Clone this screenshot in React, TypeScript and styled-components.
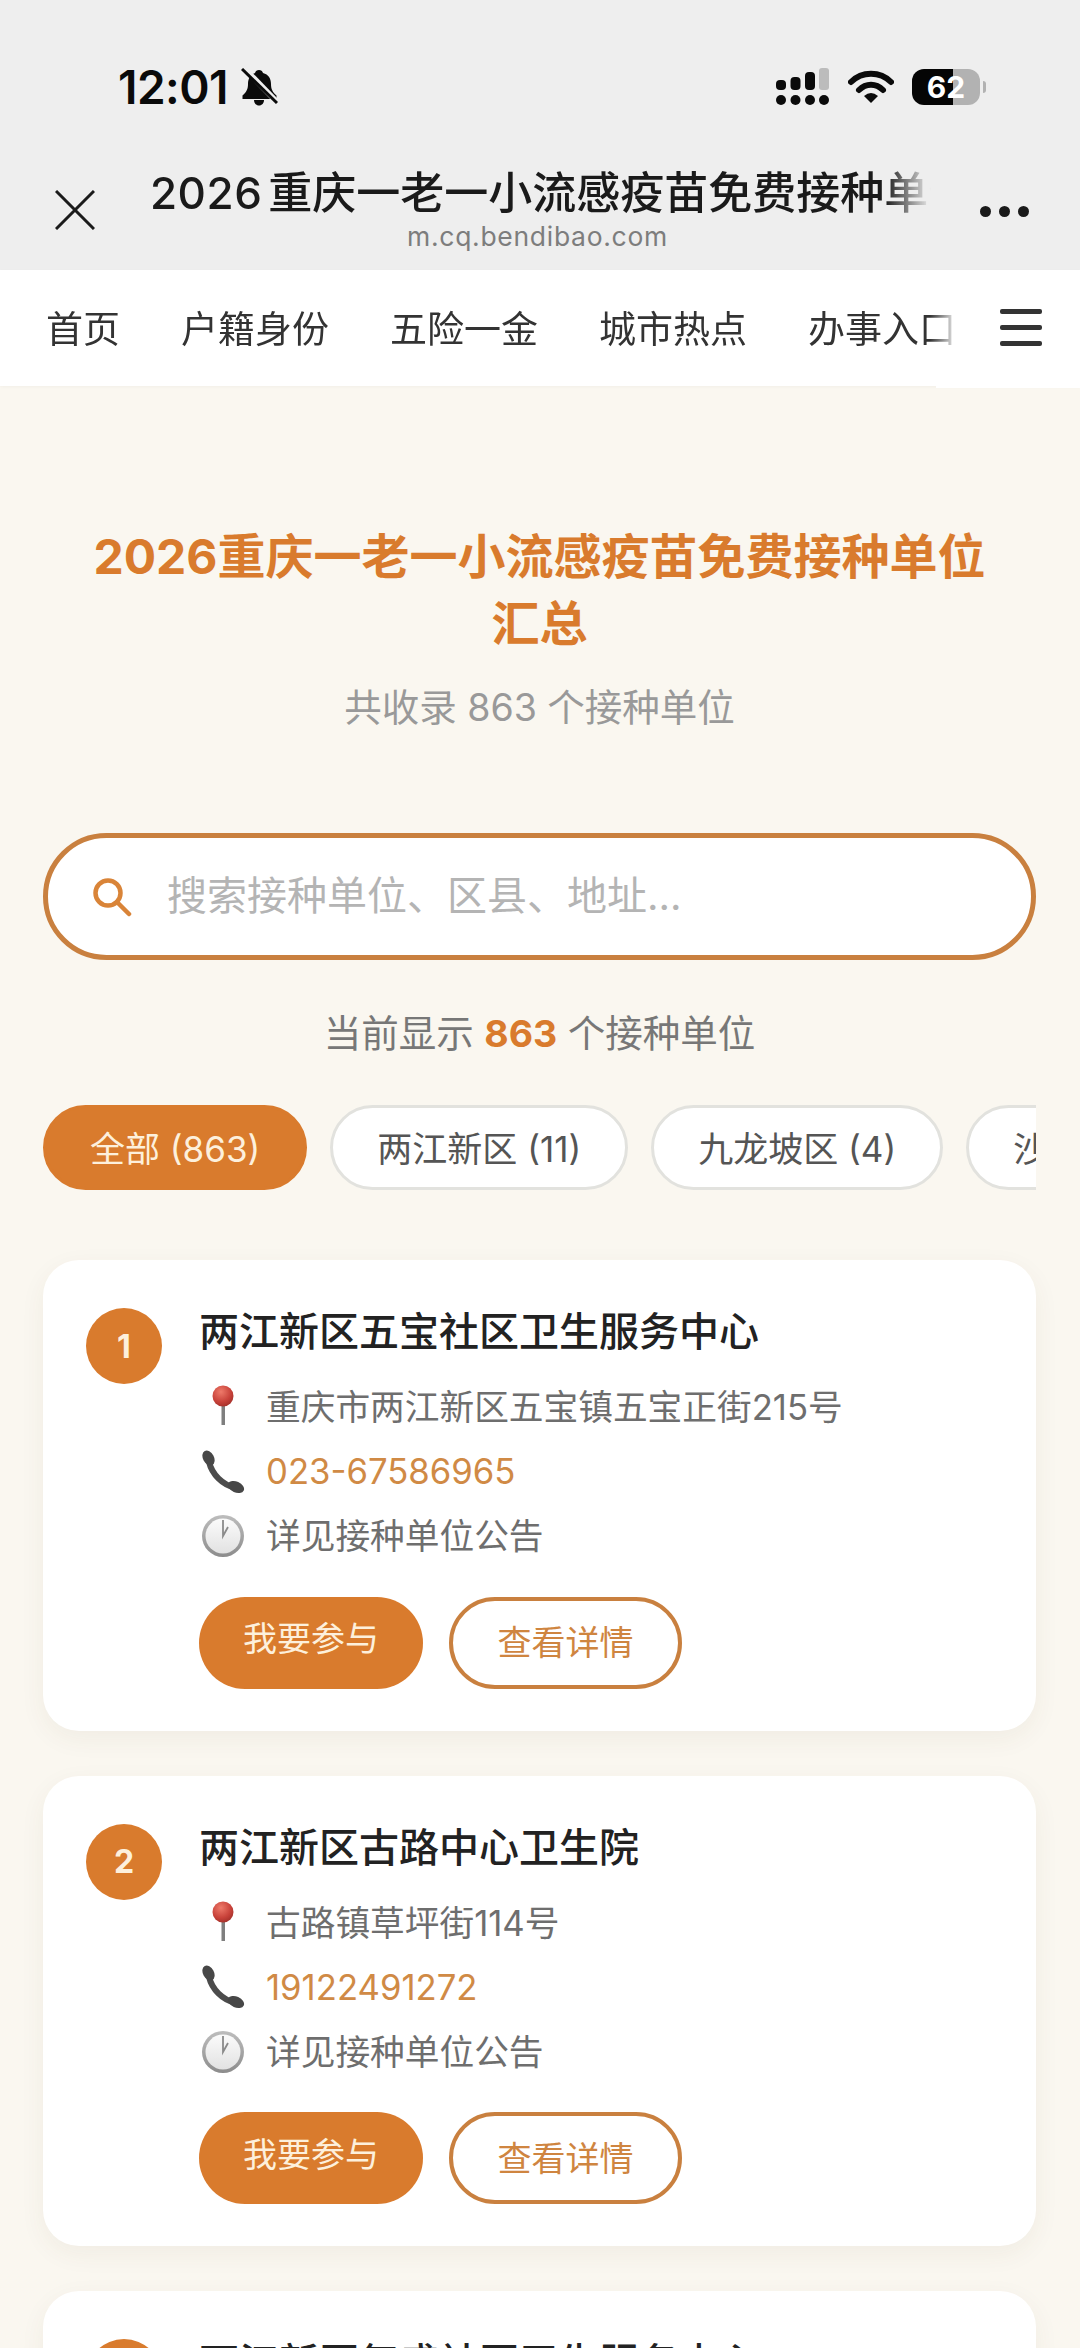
import React from "react";
import styled, { createGlobalStyle } from "styled-components";

const FONT = `Inter, "Noto Sans CJK SC", sans-serif`;
const ORANGE = "#d97b2d";

const Global = createGlobalStyle`
  html, body { margin: 0; padding: 0; background: #faf7f0; }
  body { font-family: ${FONT}; width: 1080px; height: 2348px; overflow: hidden; }
  * { box-sizing: border-box; }
`;

const Page = styled.div`
  width: 1080px;
  height: 2348px;
  overflow: hidden;
  background: #faf7f0;
`;

const Header = styled.header`
  height: 270px;
  background: #eeeeee;
  padding-top: 66px;
`;
const StatusBar = styled.div`
  display: flex;
  align-items: center;
  height: 42px;
  padding-left: 118px;
  color: #0a0a0a;
`;
const Time = styled.span`
  font-size: 46px;
  font-weight: 600;
  letter-spacing: -0.5px;
  line-height: 42px;
  width: 123px;
`;
const StatusRight = styled.div`
  display: flex;
  align-items: center;
  margin-left: auto;
  margin-right: 100px;
  gap: 18px;
`;
const Battery = styled.div`
  position: relative;
  width: 68px;
  height: 36px;
  border-radius: 12px;
  background: linear-gradient(to right, #050505 60%, #b2b2b2 60%);
  color: #fff;
  font-size: 30px;
  font-weight: 700;
  line-height: 36px;
  text-align: center;
  &::after {
    content: "";
    position: absolute;
    right: -6px;
    top: 12px;
    width: 3px;
    height: 12px;
    border-radius: 0 3px 3px 0;
    background: #b2b2b2;
  }
`;
const TitleBar = styled.div`
  display: flex;
  align-items: flex-start;
  margin-top: 54px;
  padding-left: 55px;
`;
const CloseIcon = styled.svg`
  width: 40px;
  height: 40px;
  margin-top: 28px;
  flex-shrink: 0;
`;
const TitleColumn = styled.div`
  width: 781px;
  margin-left: 55px;
  display: flex;
  flex-direction: column;
  align-items: center;
`;
const PageName = styled.div`
  width: 100%;
  height: 62px;
  font-size: 44px;
  font-weight: 500;
  line-height: 62px;
  color: #1a1a1a;
  white-space: nowrap;
  overflow: hidden;
  mask-image: linear-gradient(to right, #000 calc(100% - 46px), transparent);
`;
const Year = styled.span`
  margin-right: 6px;
  letter-spacing: 0.5px;
`;
const Url = styled.div`
  font-size: 26.5px;
  line-height: 32px;
  margin-top: -4px;
  margin-right: 6px;
  letter-spacing: 0.7px;
  color: #7d7d7d;
`;
const Dots = styled.div`
  display: flex;
  gap: 8px;
  margin-left: 49px;
  margin-top: 44px;
`;
const Dot = styled.span`
  width: 11px;
  height: 11px;
  border-radius: 50%;
  background: #1a1a1a;
`;

const Nav = styled.nav`
  display: flex;
  height: 116px;
  background: #fff;
  padding-left: 46px;
  box-shadow: 0 1px 3px rgba(0, 0, 0, 0.03);
`;
const NavScroll = styled.div`
  display: flex;
  align-items: center;
  gap: 61px;
  width: 912px;
  padding-bottom: 2px;
  overflow: hidden;
  mask-image: linear-gradient(to right, #000 calc(100% - 28px), transparent);
`;
const NavItem = styled.span`
  flex-shrink: 0;
  font-size: 37px;
  color: #333;
  white-space: nowrap;
`;
const MenuButton = styled.div`
  position: relative;
  z-index: 1;
  display: flex;
  flex-direction: column;
  justify-content: center;
  gap: 11px;
  width: 122px;
  height: 118px;
  padding: 0 38px 4px 42px;
  background: #fff;
  &::before {
    content: "";
    position: absolute;
    left: -22px;
    top: 116px;
    width: 22px;
    height: 2px;
    background: #fff;
  }
`;
const MenuBar = styled.span`
  display: block;
  height: 5px;
  border-radius: 2px;
  background: #333;
`;

const Main = styled.main`
  padding: 137px 44px 0 43px;
`;
const Heading = styled.h1`
  margin: 0;
  font-size: 48px;
  font-weight: 700;
  line-height: 67px;
  text-align: center;
  color: ${ORANGE};
  padding: 0 40px;
`;
const Subheading = styled.p`
  margin: 26px 0 0;
  font-size: 37.5px;
  line-height: 50px;
  text-align: center;
  color: #999;
`;
const SearchBox = styled.div`
  display: flex;
  align-items: center;
  gap: 35px;
  height: 127px;
  margin-top: 100px;
  padding: 0 0 0 44px;
  background: #fff;
  border: 5px solid #c9803f;
  border-radius: 64px;
`;
const SearchHint = styled.span`
  font-size: 40px;
  line-height: 50px;
  padding-bottom: 2px;
  color: #b4b4b4;
`;
const CountLine = styled.p`
  margin: 49px 0 0;
  font-size: 37.5px;
  line-height: 50px;
  text-align: center;
  color: #777;
`;
const CountValue = styled.strong`
  color: ${ORANGE};
  font-weight: 700;
`;
const Chips = styled.div`
  display: flex;
  gap: 23px;
  margin-top: 46px;
  overflow: hidden;
`;
const Chip = styled.span<{ $active?: boolean }>`
  flex-shrink: 0;
  height: 85px;
  padding: 0 44px 2px;
  display: flex;
  align-items: center;
  border-radius: 43px;
  font-size: 35px;
  white-space: nowrap;
  background: ${(p) => (p.$active ? ORANGE : "#fff")};
  color: ${(p) => (p.$active ? "#fdf0dc" : "#555")};
  border: 3px solid ${(p) => (p.$active ? ORANGE : "#e2e2de")};
`;
const CardList = styled.div`
  display: flex;
  flex-direction: column;
  gap: 45px;
  margin-top: 70px;
`;
const Card = styled.article`
  display: flex;
  gap: 37px;
  padding: 44px 43px 42px;
  background: #fff;
  border-radius: 36px;
  box-shadow: 0 8px 26px rgba(90, 70, 40, 0.06);
`;
const Badge = styled.div`
  flex-shrink: 0;
  width: 76px;
  height: 76px;
  margin-top: 4px;
  border-radius: 50%;
  background: ${ORANGE};
  color: #fdf0dc;
  font-size: 32px;
  font-weight: 700;
  display: flex;
  align-items: center;
  justify-content: center;
`;
const CardBody = styled.div`
  flex: 1;
  min-width: 0;
`;
const CardTitle = styled.h2`
  margin: 0 0 15px;
  font-size: 40px;
  font-weight: 500;
  line-height: 56px;
  color: #222;
`;
const InfoRow = styled.div`
  display: flex;
  align-items: center;
  gap: 21px;
  height: 64.5px;
  padding-left: 2px;
  font-size: 34.7px;
  color: #6e6e6e;
`;
const RowText = styled.span`
  margin-top: -4px;
`;
const RowIcon = styled.svg`
  width: 44px;
  height: 44px;
  flex-shrink: 0;
`;
const PhoneText = styled(RowText)`
  color: #d08a45;
  margin-top: -1px;
`;
const Actions = styled.div`
  display: flex;
  gap: 26px;
  margin-top: 28px;
`;
const JoinButton = styled.button`
  width: 224px;
  height: 92px;
  border: 0;
  padding: 0 0 12px;
  border-radius: 46px;
  background: ${ORANGE};
  color: #fdf0dc;
  font: 34px ${FONT};
`;
const DetailButton = styled.button`
  width: 233px;
  height: 92px;
  padding: 0 0 4px;
  border: 4px solid #c9803f;
  border-radius: 46px;
  background: #fff;
  color: #cf8540;
  font: 34px ${FONT};
`;

const BellIcon = () => (
  <svg width="37" height="38" viewBox="0 0 37 38">
    <path d="M18 2c2 0 3.500 1.200 4 3 5.500 1.500 8 5.500 8 11 0 5 1.500 8 5.500 11.500V31H1.500v-3.500C5.500 24 7 21 7 16c0-5.500 2.500-9.500 7-11 .5-1.800 2-3 4-3z" fill="#0a0a0a" />
    <path d="M13 32h10c0 3-2 5.500-5 5.500s-5-2.500-5-5.500z" fill="#0a0a0a" />
    <path d="M2 -1L38 36" stroke="#eee" strokeWidth="5.500" />
    <path d="M1 1L36 35" stroke="#0a0a0a" strokeWidth="3" />
  </svg>
);

const SignalIcon = () => (
  <svg width="54" height="38" viewBox="0 0 54 38">
    <rect x="0" y="12" width="10" height="10" rx="4" fill="#0a0a0a" />
    <rect x="14.500" y="9" width="10" height="13" rx="4" fill="#0a0a0a" />
    <rect x="29" y="4" width="10" height="18" rx="4" fill="#0a0a0a" />
    <rect x="43" y="0" width="10" height="22" rx="3" fill="#bcbcbc" />
    <circle cx="5" cy="32" r="5" fill="#0a0a0a" />
    <circle cx="19.500" cy="32" r="5" fill="#0a0a0a" />
    <circle cx="34" cy="32" r="5" fill="#0a0a0a" />
    <circle cx="48" cy="32" r="5" fill="#0a0a0a" />
  </svg>
);

const WifiIcon = () => (
  <svg width="46" height="34" viewBox="0 0 46 34">
    <path d="M3 12C14 1 32 1 43 12" fill="none" stroke="#0a0a0a" strokeWidth="6" strokeLinecap="round" />
    <path d="M11 20C18 13 28 13 35 20" fill="none" stroke="#0a0a0a" strokeWidth="6" strokeLinecap="round" />
    <path d="M16 26Q23 20 30 26L23 33Z" fill="#0a0a0a" />
  </svg>
);

const SearchIcon = () => (
  <svg width="40" height="40" viewBox="0 0 40 40" fill="none" stroke="#d98438" strokeWidth="4.500" strokeLinecap="round">
    <circle cx="16" cy="16" r="12.500" />
    <path d="M25 25L37 37" />
  </svg>
);

const PinIcon = () => (
  <RowIcon viewBox="0 0 44 44">
    <defs>
      <radialGradient id="pinBall" cx="0.4" cy="0.3" r="0.8">
        <stop offset="0" stopColor="#ee7a6a" />
        <stop offset="0.6" stopColor="#c8423a" />
        <stop offset="1" stopColor="#9a2c26" />
      </radialGradient>
    </defs>
    <rect x="20.500" y="18" width="3.500" height="22" fill="#7f7f7f" />
    <circle cx="22" cy="11" r="10.500" fill="url(#pinBall)" />
  </RowIcon>
);

const PhoneIcon = () => (
  <RowIcon viewBox="0 0 44 44">
    <path d="M8 12C11 24 21 35 35 38" fill="none" stroke="#4c4c4c" strokeWidth="6" />
    <ellipse cx="7.500" cy="8" rx="5.500" ry="8" transform="rotate(-28 7.500 8)" fill="#474747" />
    <ellipse cx="35" cy="37" rx="8.500" ry="5.500" transform="rotate(24 35 37)" fill="#474747" />
  </RowIcon>
);

const ClockIcon = () => (
  <RowIcon viewBox="0 0 44 44">
    <defs>
      <linearGradient id="clockRim" x1="0" y1="0" x2="0" y2="1">
        <stop offset="0" stopColor="#bdbdbd" />
        <stop offset="1" stopColor="#8c8c8c" />
      </linearGradient>
      <linearGradient id="clockFace" x1="0" y1="0" x2="0" y2="1">
        <stop offset="0" stopColor="#fbfbfb" />
        <stop offset="1" stopColor="#e2e2e2" />
      </linearGradient>
    </defs>
    <circle cx="22" cy="22" r="21" fill="url(#clockRim)" />
    <circle cx="22" cy="22" r="17.500" fill="url(#clockFace)" />
    <path d="M22 6V22L27 13" fill="none" stroke="#8a8a8a" strokeWidth="1.800" />
  </RowIcon>
);

const sites = [
  { name: "两江新区五宝社区卫生服务中心", address: "重庆市两江新区五宝镇五宝正街215号", phone: "023-67586965" },
  { name: "两江新区古路中心卫生院", address: "古路镇草坪街114号", phone: "19122491272" },
  { name: "两江新区复盛社区卫生服务中心", address: "复盛镇正街", phone: "023-67500000" },
];

export default function App() {
  return (
    <Page>
      <Global />
      <Header>
        <StatusBar>
          <Time>12:01</Time>
          <BellIcon />
          <StatusRight>
            <SignalIcon />
            <WifiIcon />
            <Battery>62</Battery>
          </StatusRight>
        </StatusBar>
        <TitleBar>
          <CloseIcon viewBox="0 0 40 40">
            <path d="M1 1L39 39M39 1L1 39" stroke="#1a1a1a" strokeWidth="3" fill="none" />
          </CloseIcon>
          <TitleColumn>
            <PageName>
              <Year>2026</Year>重庆一老一小流感疫苗免费接种单位汇总
            </PageName>
            <Url>m.cq.bendibao.com</Url>
          </TitleColumn>
          <Dots>
            <Dot />
            <Dot />
            <Dot />
          </Dots>
        </TitleBar>
      </Header>
      <Nav>
        <NavScroll>
          <NavItem>首页</NavItem>
          <NavItem>户籍身份</NavItem>
          <NavItem>五险一金</NavItem>
          <NavItem>城市热点</NavItem>
          <NavItem>办事入口</NavItem>
        </NavScroll>
        <MenuButton>
          <MenuBar />
          <MenuBar />
          <MenuBar />
        </MenuButton>
      </Nav>
      <Main>
        <Heading>2026重庆一老一小流感疫苗免费接种单位汇总</Heading>
        <Subheading>共收录 863 个接种单位</Subheading>
        <SearchBox>
          <SearchIcon />
          <SearchHint>搜索接种单位、区县、地址...</SearchHint>
        </SearchBox>
        <CountLine>
          当前显示 <CountValue>863</CountValue> 个接种单位
        </CountLine>
        <Chips>
          <Chip $active>全部 (863)</Chip>
          <Chip>两江新区 (11)</Chip>
          <Chip>九龙坡区 (4)</Chip>
          <Chip>沙坪坝区 (9)</Chip>
        </Chips>
        <CardList>
          {sites.map((site, i) => (
            <Card key={site.name}>
              <Badge>{i + 1}</Badge>
              <CardBody>
                <CardTitle>{site.name}</CardTitle>
                <InfoRow>
                  <PinIcon />
                  <RowText>{site.address}</RowText>
                </InfoRow>
                <InfoRow>
                  <PhoneIcon />
                  <PhoneText>{site.phone}</PhoneText>
                </InfoRow>
                <InfoRow>
                  <ClockIcon />
                  <RowText>详见接种单位公告</RowText>
                </InfoRow>
                <Actions>
                  <JoinButton>我要参与</JoinButton>
                  <DetailButton>查看详情</DetailButton>
                </Actions>
              </CardBody>
            </Card>
          ))}
        </CardList>
      </Main>
    </Page>
  );
}
